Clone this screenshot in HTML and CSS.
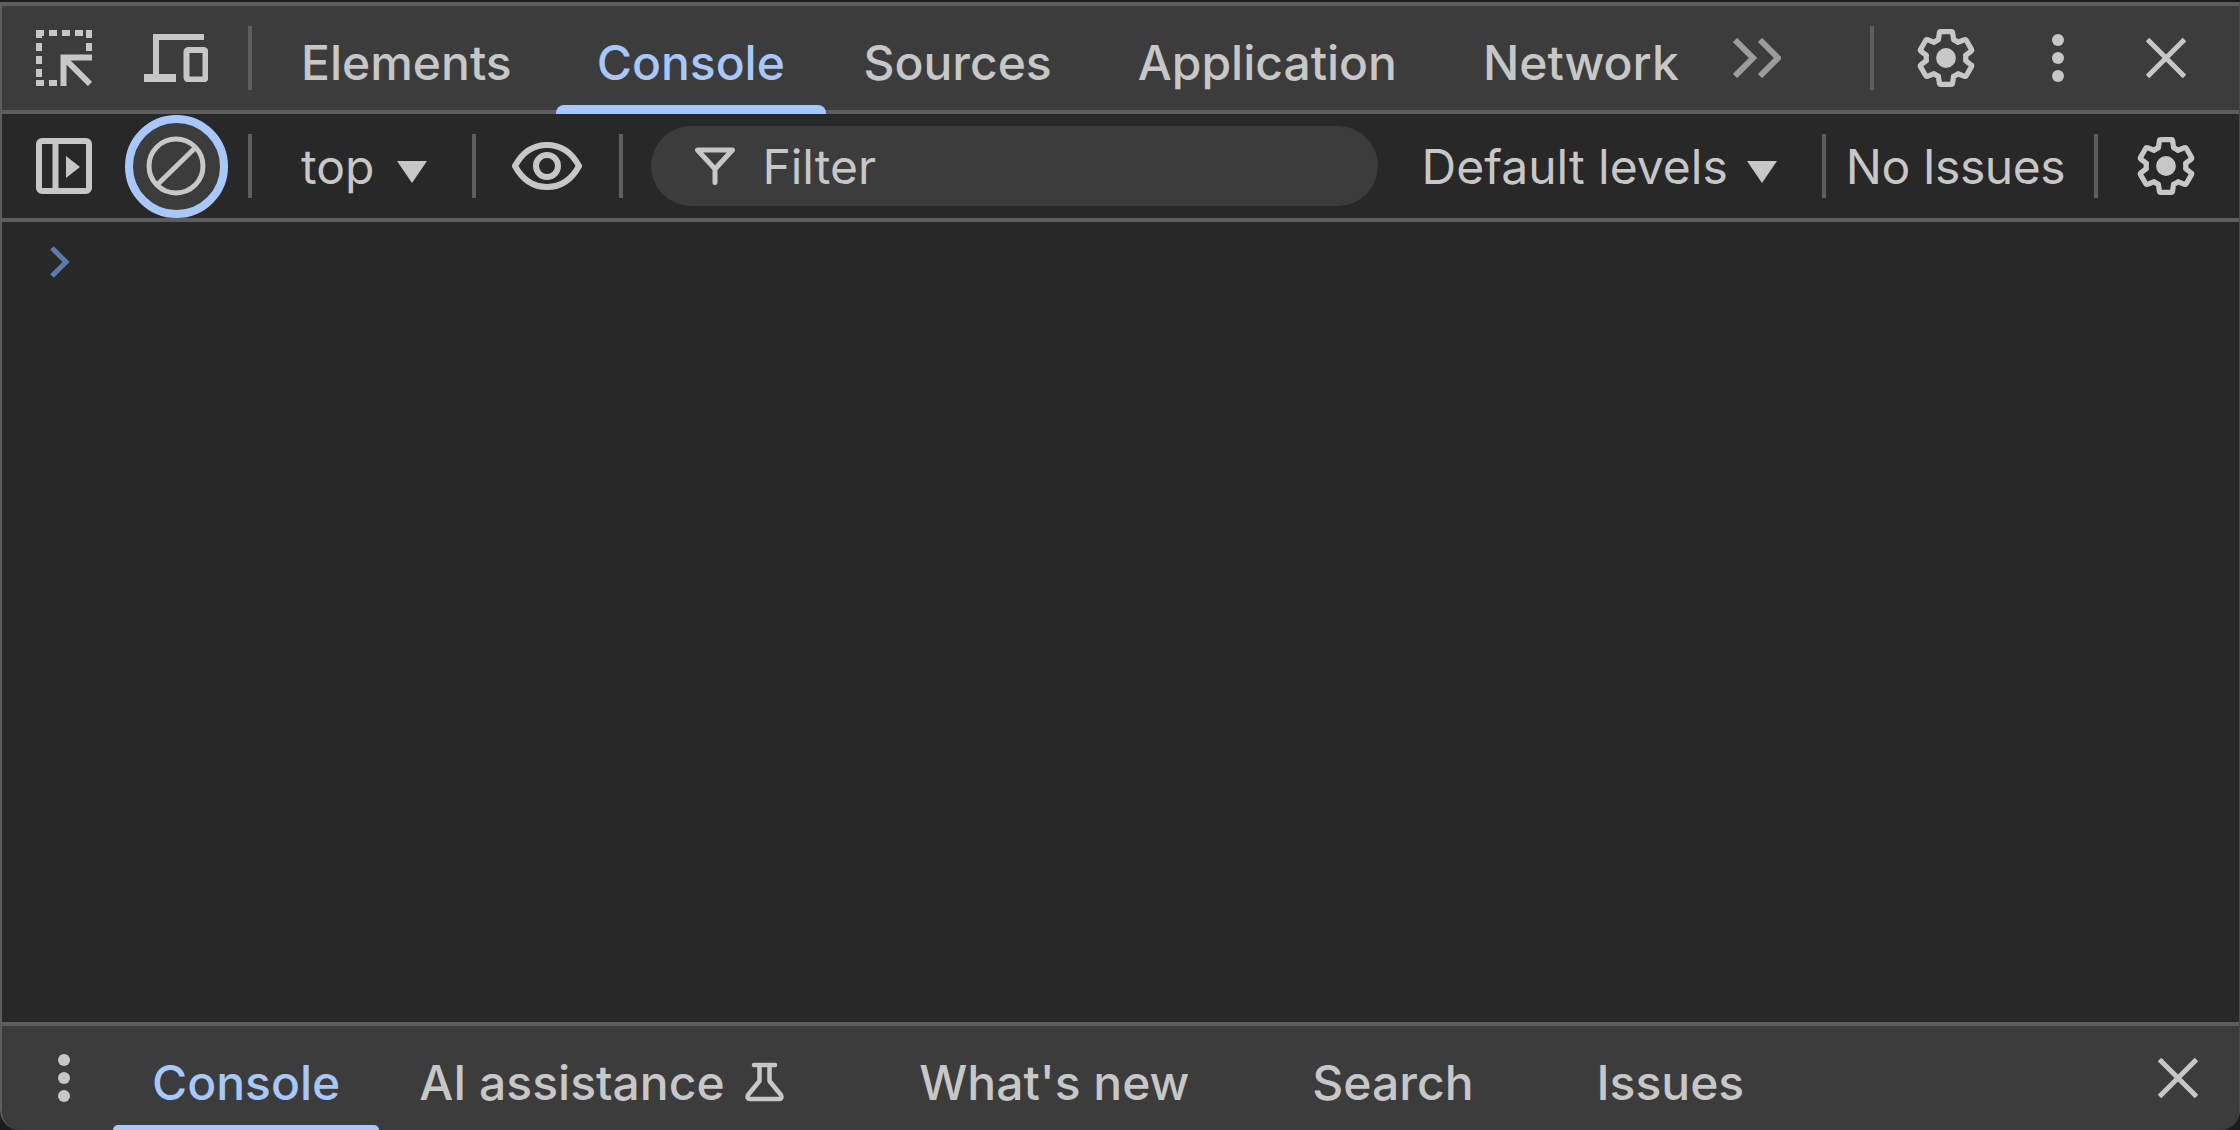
FILE: index.html
```html
<!DOCTYPE html>
<html lang="en">
<head>
<meta charset="utf-8">
<title>DevTools Console</title>
<link rel="stylesheet" href="styles.css">
</head>
<body>
<div class="devtools">
  <header class="bar tabbar">
    <button class="icon-btn">
      <svg width="56" height="56" viewBox="0 0 56 56"><path class="ln" stroke-dasharray="8 5" d="M0 3H56M3 0V56M0 53H21M53 0V21"/><path class="ln" d="M56 27.500H27.500V56M27.500 27.500L54 54"/></svg>
    </button>
    <button class="icon-btn">
      <svg width="64" height="48" viewBox="0 0 64 48"><path class="ln" d="M60 3H12V44"/><path class="ln wide-ln" d="M0 44H32"/><rect class="ln" x="42.500" y="16" width="19" height="29.500" rx="2"/></svg>
    </button>
    <span class="sep"></span>
    <nav class="tabs">
      <a class="tab">Elements</a>
      <a class="tab active">Console</a>
      <a class="tab">Sources</a>
      <a class="tab">Application</a>
      <a class="tab">Network</a>
    </nav>
    <button class="more">
      <svg width="48" height="40" viewBox="0 0 48 40"><path class="ln dim" d="M2 2L20 20L2 38M27 2L45 20L27 38"/></svg>
    </button>
    <div class="cluster">
      <span class="sep"></span>
      <button class="icon-btn gear-btn">
        <svg width="66" height="66" viewBox="0 0 24 24"><path class="gear" d="M19.140 12.940c.04-.3.06-.61.06-.94 0-.32-.02-.64-.07-.94l2.030-1.580a.49.49 0 0 0 .12-.61l-1.920-3.320a.488.488 0 0 0-.59-.22l-2.390.96c-.5-.38-1.030-.7-1.620-.94l-.36-2.540a.484.484 0 0 0-.48-.41h-3.840c-.24 0-.43.17-.47.41l-.36 2.540c-.59.24-1.130.57-1.620.94l-2.390-.96c-.22-.08-.47 0-.59.22L2.740 8.870c-.12.21-.08.47.12.61l2.030 1.580c-.05.3-.09.63-.09.94s.02.64.07.94l-2.030 1.580a.49.49 0 0 0-.12.61l1.920 3.320c.12.22.37.29.59.22l2.390-.96c.5.38 1.030.7 1.620.94l.36 2.540c.05.24.24.41.48.41h3.840c.24 0 .44-.17.47-.41l.36-2.540c.59-.24 1.130-.56 1.620-.94l2.390.96c.22.08.47 0 .59-.22l1.920-3.320c.12-.22.07-.47-.12-.61l-2.010-1.580z"/><circle class="fill" cx="12" cy="12" r="3.600"/></svg>
      </button>
      <button class="icon-btn dots-btn">
        <svg width="12" height="48" viewBox="0 0 12 48"><circle class="fill" cx="6" cy="6" r="6"/><circle class="fill" cx="6" cy="24" r="6"/><circle class="fill" cx="6" cy="42" r="6"/></svg>
      </button>
      <button class="icon-btn close-btn">
        <svg width="40" height="40" viewBox="0 0 40 40"><path class="ln x" d="M1.500 1.500L38.500 38.500M38.500 1.500L1.500 38.500"/></svg>
      </button>
    </div>
  </header>

  <div class="bar toolbar">
    <button class="icon-btn">
      <svg width="56" height="56" viewBox="0 0 56 56"><rect class="ln" x="3" y="3" width="50" height="50" rx="3"/><path class="ln" d="M19.500 3V53"/><path class="fill" d="M30 18L44 29L30 40Z"/></svg>
    </button>
    <button class="icon-btn">
      <span class="focus-ring">
        <svg width="60" height="60" viewBox="0 0 60 60"><circle class="ln x" cx="30" cy="30" r="27"/><path class="ln x" d="M12 48L50 11"/></svg>
      </span>
    </button>
    <span class="sep"></span>
    <button class="select top-select">top<i class="caret"></i></button>
    <span class="sep"></span>
    <button class="icon-btn eye-btn">
      <svg width="70" height="48" viewBox="0 0 70 48"><path class="ln" d="M3 24C10 11 21 3 35 3S60 11 67 24C60 37 49 45 35 45S10 37 3 24Z"/><circle class="ln" cx="35" cy="24" r="11"/></svg>
    </button>
    <span class="sep"></span>
    <div class="filter">
      <svg width="40" height="38" viewBox="0 0 40 38"><path class="ln x round" d="M2.500 3H37.500L20 22ZM20 22V35.500"/></svg>
      <span class="filter-text">Filter</span>
    </div>
    <button class="select levels">Default levels<i class="caret"></i></button>
    <span class="sep"></span>
    <span class="issues">No Issues</span>
    <span class="sep"></span>
    <button class="icon-btn end-gear">
      <svg width="66" height="66" viewBox="0 0 24 24"><path class="gear" d="M19.140 12.940c.04-.3.06-.61.06-.94 0-.32-.02-.64-.07-.94l2.030-1.580a.49.49 0 0 0 .12-.61l-1.920-3.320a.488.488 0 0 0-.59-.22l-2.390.96c-.5-.38-1.030-.7-1.620-.94l-.36-2.540a.484.484 0 0 0-.48-.41h-3.840c-.24 0-.43.17-.47.41l-.36 2.540c-.59.24-1.130.57-1.620.94l-2.390-.96c-.22-.08-.47 0-.59.22L2.740 8.870c-.12.21-.08.47.12.61l2.030 1.580c-.05.3-.09.63-.09.94s.02.64.07.94l-2.030 1.580a.49.49 0 0 0-.12.61l1.920 3.320c.12.22.37.29.59.22l2.390-.96c.5.38 1.030.7 1.620.94l.36 2.540c.05.24.24.41.48.41h3.840c.24 0 .44-.17.47-.41l.36-2.540c.59-.24 1.130-.56 1.620-.94l2.390.96c.22.08.47 0 .59-.22l1.920-3.320c.12-.22.07-.47-.12-.61l-2.010-1.580z"/><circle class="fill" cx="12" cy="12" r="3.600"/></svg>
    </button>
  </div>

  <main class="console">
    <svg class="prompt" width="20" height="32" viewBox="0 0 20 32"><path d="M2 2L16 16L2 30"/></svg>
  </main>

  <footer class="bar drawer">
    <button class="icon-btn drawer-dots">
      <svg width="12" height="48" viewBox="0 0 12 48"><circle class="fill" cx="6" cy="6" r="6"/><circle class="fill" cx="6" cy="24" r="6"/><circle class="fill" cx="6" cy="42" r="6"/></svg>
    </button>
    <nav class="tabs">
      <a class="tab drawer-tab active">Console</a>
      <a class="tab drawer-tab ai-tab">AI assistance
        <svg class="flask" width="40" height="40" viewBox="0 0 40 40"><path class="ln thin" d="M9 3H30M14.500 3V19L3 33Q1.500 37 5 37H34Q37.500 37 36 33L24.500 19V3"/></svg>
      </a>
      <a class="tab drawer-tab wide">What's new</a>
      <a class="tab drawer-tab wide">Search</a>
      <a class="tab drawer-tab wide">Issues</a>
    </nav>
    <button class="icon-btn drawer-close">
      <svg width="40" height="40" viewBox="0 0 40 40"><path class="ln x" d="M1.500 1.500L38.500 38.500M38.500 1.500L1.500 38.500"/></svg>
    </button>
  </footer>
</div>
</body>
</html>
```

FILE: styles.css
```css
* { box-sizing: border-box; }
html, body { margin: 0; height: 100%; background: #1c1c1c; overflow: hidden; }
body { padding-top: 2px; font-family: Inter, "Liberation Sans", sans-serif; color: #c7c7c7; font-size: 48px; }

.devtools {
  height: 1128px;
  display: flex;
  flex-direction: column;
  border-top: 4px solid #5e5e5e;
  border-left: 2px solid #5e5e5e;
  border-right: 1px solid #4c4c4c;
  border-radius: 0 0 20px 20px;
  overflow: hidden;
  background: #282828;
}

.bar { display: flex; align-items: center; flex: none; height: 108px; }
.tabbar { background: #3c3c3c; border-bottom: 4px solid #5e5e5e; padding-left: 6px; }
.toolbar { background: #282828; border-bottom: 4px solid #5e5e5e; padding-left: 6px; }
.drawer { background: #3c3c3c; border-top: 4px solid #5e5e5e; padding-left: 12px; }

button { background: none; border: 0; padding: 0; margin: 0; color: inherit; font: inherit; }
svg { display: block; flex: none; }
.ln { fill: none; stroke: #c7c7c7; stroke-width: 6; }
.ln.dim { stroke: #9c9c9c; }
.ln.x { stroke-width: 5; }
.ln.round { stroke-linecap: round; stroke-linejoin: round; }
.ln.wide-ln { stroke-width: 8; }
.ln.thin { stroke-width: 4.500; stroke-linecap: round; stroke-linejoin: round; }
.fill { fill: #c7c7c7; }
.gear { fill: none; stroke: #c7c7c7; stroke-width: 1.900; stroke-linejoin: round; }

.icon-btn { width: 112px; height: 100%; display: flex; align-items: center; justify-content: center; flex: none; }
.sep { width: 4px; height: 64px; background: #5e5e5e; margin-left: 16px; flex: none; }

.tabs { display: flex; align-self: stretch; margin-left: 6px; }
.tab { display: flex; align-items: center; padding: 8px 43px 0; position: relative; white-space: nowrap; font-weight: 500; }
.tab.active { color: #a8c7fa; }
.tabbar .tab.active { margin-left: -1px; margin-right: -7.500px; }
.tab.active::after {
  content: "";
  position: absolute;
  left: 2px; right: 2px; bottom: -4px;
  height: 9px;
  background: #a8c7fa;
  border-radius: 8px 8px 0 0;
}

.more { margin-left: 11px; width: 48px; }
.cluster { margin-left: auto; display: flex; align-items: center; align-self: stretch; }
.cluster .sep { margin-left: 0; }
.gear-btn { width: 66px; margin-left: 39px; }
.dots-btn { width: 12px; margin-left: 73px; }
.close-btn { width: 40px; margin-left: 82px; margin-right: 53px; }

.focus-ring {
  width: 103px; height: 103px;
  border-radius: 50%;
  border: 8px solid #a8c7fa;
  background: #3c3c3c;
  display: flex; align-items: center; justify-content: center;
}

.select { display: flex; align-items: center; white-space: nowrap; }
.caret { width: 0; height: 0; border-left: 15px solid transparent; border-right: 15px solid transparent; border-top: 22px solid #c7c7c7; margin: 12px 0 0 23px; }
.top-select { margin-left: 49px; }
.top-select + .sep { margin-left: 45px; }
.eye-btn { width: 70px; margin-left: 36px; }
.eye-btn + .sep { margin-left: 37px; }

.filter {
  flex: 1;
  height: 80px;
  margin-left: 28px;
  background: #3c3c3c;
  border-radius: 40px;
  display: flex; align-items: center;
  padding-left: 44px;
}
.filter-text { margin-left: 27px; }
.levels { margin-left: 44px; }
.levels .caret { margin-left: 19px; }
.levels + .sep { margin-left: 45px; }
.issues { margin-left: 20px; white-space: nowrap; letter-spacing: -0.500px; }
.issues + .sep { margin-left: 29px; }
.end-gear { width: 66px; margin-left: 35px; margin-right: 40px; }

.console { flex: 1; padding: 24px 0 0 48px; }
.prompt path { fill: none; stroke: #5a7ab0; stroke-width: 5; }

.drawer-dots { width: 99px; }
.drawer .tabs { margin-left: 0; }
.drawer-tab { padding: 8px 40px 0; }
.drawer-tab.active { padding: 8px 39px 0; }
.drawer-tab.active::after { left: 0; right: 0; bottom: 0; height: 5px; }
.ai-tab { padding-right: 0; }
.flask { margin-left: 20px; }
.wide { padding: 8px 61.500px 0; }
.ai-tab + .wide { margin-left: 73px; }
.drawer-close { width: 40px; margin-left: auto; margin-right: 41px; }
```
